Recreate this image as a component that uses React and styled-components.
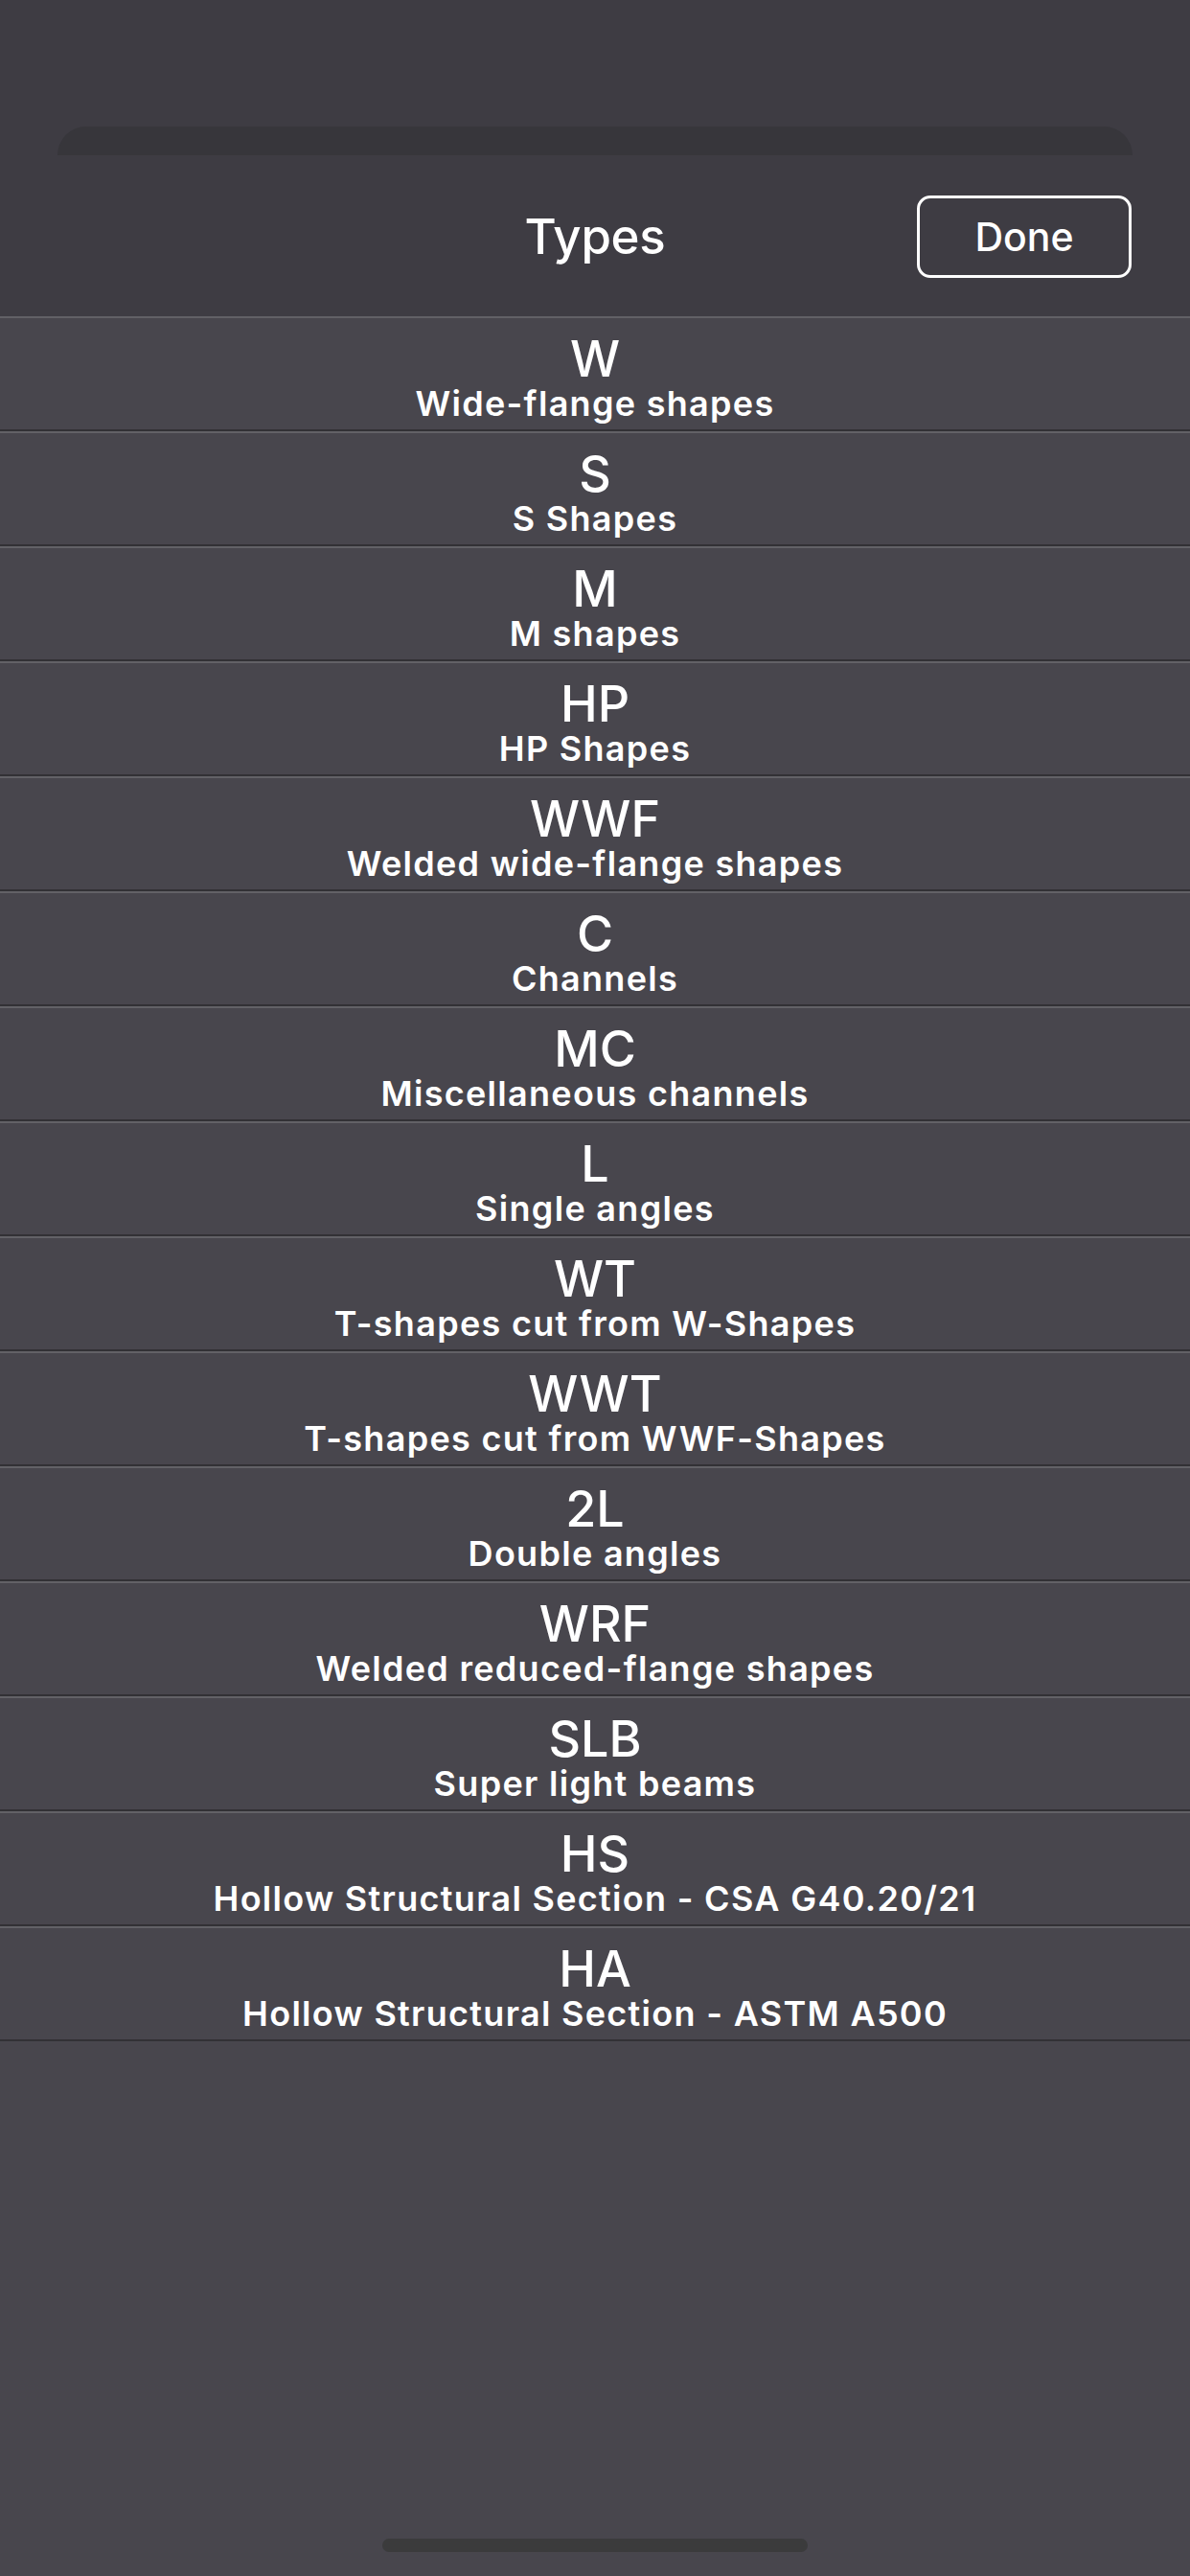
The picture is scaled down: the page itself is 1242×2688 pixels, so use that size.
import React from "react";
import styled, { createGlobalStyle } from "styled-components";

const GlobalStyle = createGlobalStyle`
  html, body {
    margin: 0;
    padding: 0;
    background: #3e3c43;
  }
  * {
    box-sizing: border-box;
  }
`;

const Screen = styled.div`
  width: 1242px;
  height: 2688px;
  background: #3e3c43;
  display: flex;
  flex-direction: column;
  font-family: Inter, "Open Sans", sans-serif;
  color: #ffffff;
  overflow: hidden;
`;

const BackCard = styled.div`
  margin: 132px 60px 0;
  height: 30px;
  background: #37363b;
  border-radius: 30px 30px 0 0;
`;

const Sheet = styled.div`
  flex: 1;
  display: flex;
  flex-direction: column;
  background: #48464d;
`;

const Header = styled.div`
  height: 168px;
  display: grid;
  grid-template-columns: 1fr auto 1fr;
  align-items: center;
  background: #3e3c43;
`;

const Title = styled.h1`
  grid-column: 2;
  margin: 0;
  font-size: 51px;
  font-weight: 500;
  line-height: 1;
  letter-spacing: -0.3px;
`;

const DoneButton = styled.button`
  grid-column: 3;
  justify-self: end;
  margin-right: 61px;
  margin-top: 1px;
  width: 224px;
  height: 86px;
  border: 3px solid #ffffff;
  border-radius: 14px;
  background: transparent;
  color: #ffffff;
  font-family: inherit;
  font-size: 41px;
  font-weight: 500;
  padding: 0;
`;

const List = styled.ul`
  list-style: none;
  margin: 0;
  padding: 0;
`;

const Row = styled.li`
  height: 120px;
  border-top: 2px solid #626166;
  border-bottom: 2px solid #323135;
  background: #48464d;
  display: flex;
  flex-direction: column;
  align-items: center;
  padding-top: 17px;
`;

const Code = styled.div`
  font-size: 52px;
  line-height: 52px;
  font-weight: 500;
`;

const Description = styled.div`
  margin-top: 2px;
  font-size: 36px;
  line-height: 36px;
  font-weight: 600;
  letter-spacing: 1.3px;
`;

const Footer = styled.div`
  flex: 1;
  display: flex;
  align-items: flex-end;
  justify-content: center;
  padding-bottom: 25px;
`;

const HomeIndicator = styled.div`
  width: 444px;
  height: 14px;
  border-radius: 7px;
  background: #3b3b3c;
`;

const types = [
  ["W", "Wide-flange shapes"],
  ["S", "S Shapes"],
  ["M", "M shapes"],
  ["HP", "HP Shapes"],
  ["WWF", "Welded wide-flange shapes"],
  ["C", "Channels"],
  ["MC", "Miscellaneous channels"],
  ["L", "Single angles"],
  ["WT", "T-shapes cut from W-Shapes"],
  ["WWT", "T-shapes cut from WWF-Shapes"],
  ["2L", "Double angles"],
  ["WRF", "Welded reduced-flange shapes"],
  ["SLB", "Super light beams"],
  ["HS", "Hollow Structural Section - CSA G40.20/21"],
  ["HA", "Hollow Structural Section - ASTM A500"],
];

export default function App() {
  return (
    <>
      <GlobalStyle />
      <Screen>
        <BackCard />
        <Sheet>
          <Header>
            <Title>Types</Title>
            <DoneButton>Done</DoneButton>
          </Header>
          <List>
            {types.map(([code, desc]) => (
              <Row key={code}>
                <Code>{code}</Code>
                <Description>{desc}</Description>
              </Row>
            ))}
          </List>
          <Footer>
            <HomeIndicator />
          </Footer>
        </Sheet>
      </Screen>
    </>
  );
}
